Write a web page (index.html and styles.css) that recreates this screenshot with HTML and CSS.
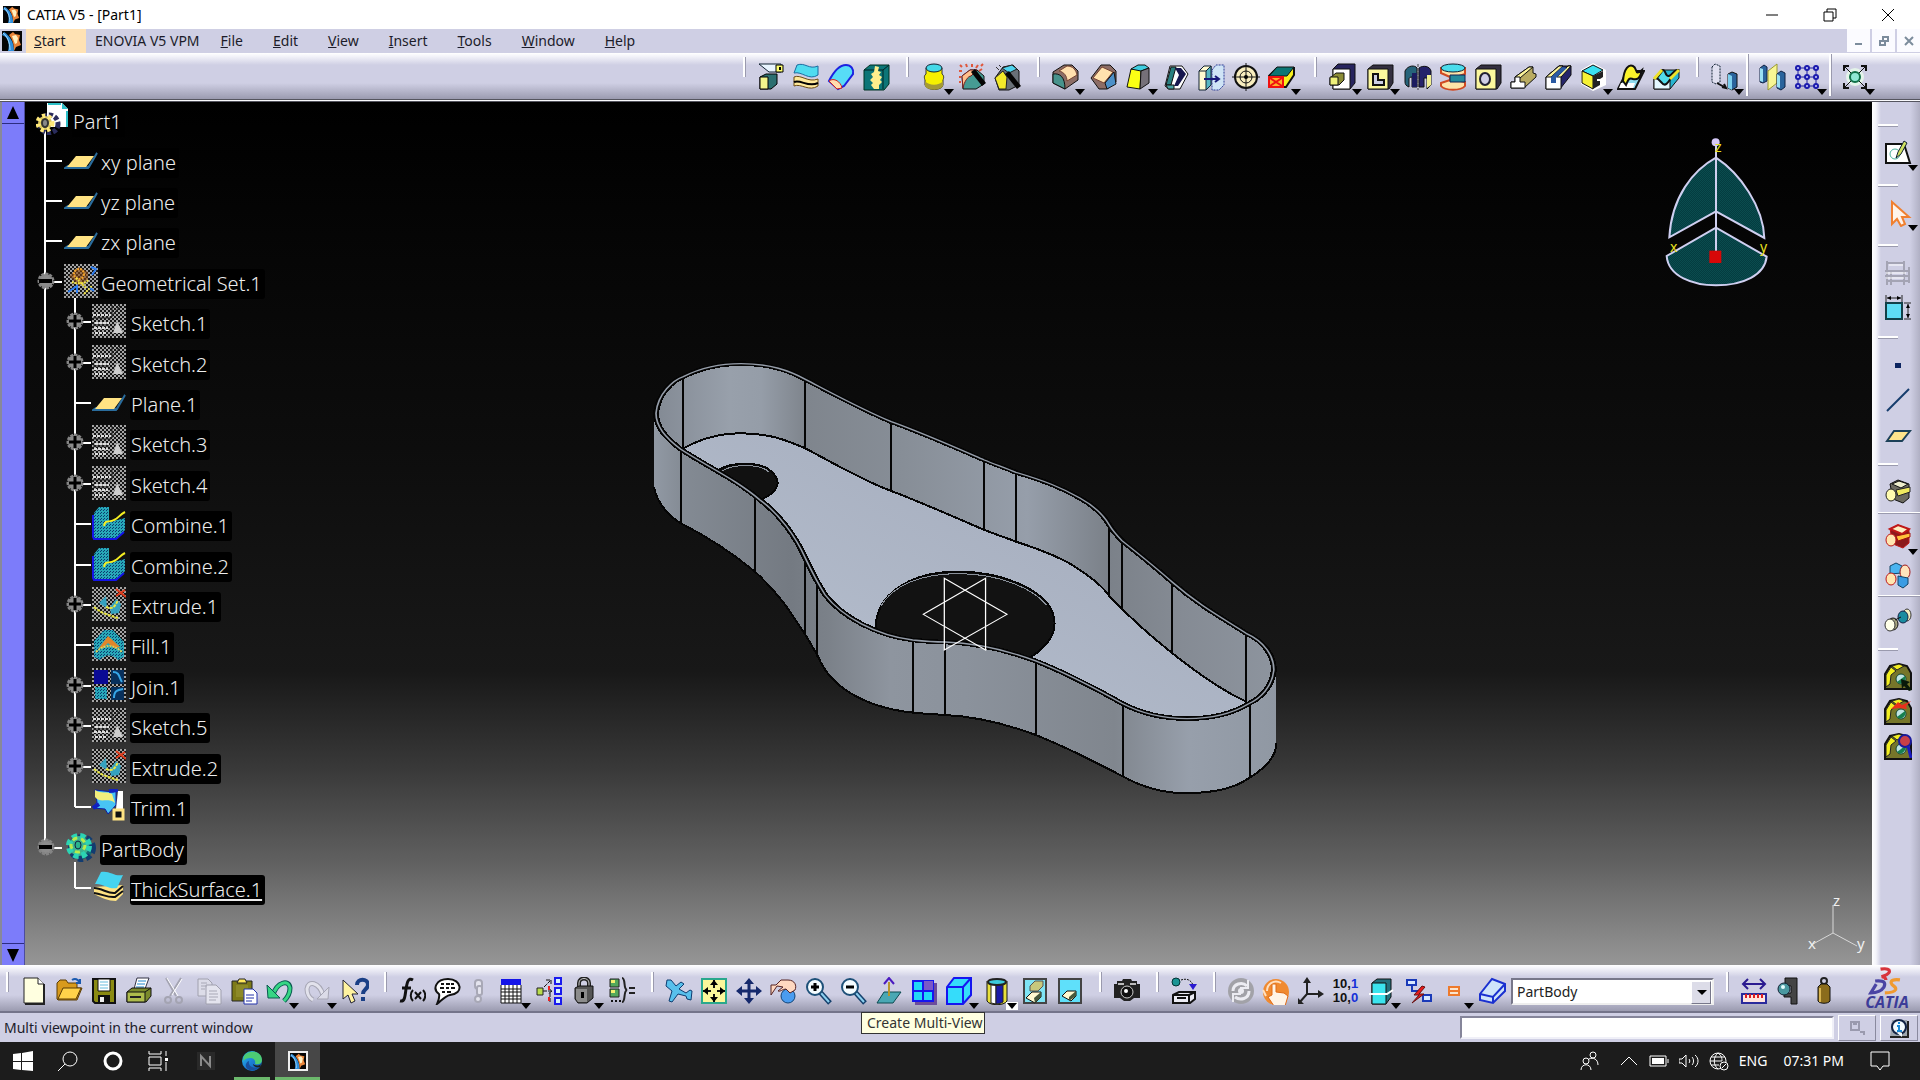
FILE: index.html
```html
<!DOCTYPE html>
<html lang="en">
<head>
<meta charset="utf-8">
<title>CATIA V5 - [Part1]</title>
<link rel="stylesheet" href="styles.css">
</head>
<body>
<svg class="defs" aria-hidden="true">
<defs>
<pattern id="grain" width="4" height="4" patternUnits="userSpaceOnUse"><rect width="4" height="4" fill="#151515"/><path d="M0 0h2v2H0zM2 2h2v2H2z" fill="#a4a4a4"/></pattern>
<pattern id="mesh" width="3" height="3" patternUnits="userSpaceOnUse"><rect width="3" height="3" fill="#28a8b8"/><path d="M0 0h1v1H0zM2 1h1v1H2z" fill="#0a3c70"/></pattern>
<linearGradient id="edge" x1="0" y1="0" x2="1" y2="1"><stop offset="0" stop-color="#2ac3e8"/><stop offset=".5" stop-color="#1b7fd6"/><stop offset="1" stop-color="#0d58b0"/></linearGradient>
</defs>
<symbol id="i-app" viewBox="0 0 20 20"><path fill="#050505" d="M0 0h20v20H0z"/><path d="M2 1c6 4 10 10 10 19H6C8 13 6 6 0 4z" fill="#2f8fdc"/><path d="M1 2c4 3 7 9 7 17" fill="none" stroke="#a8dcff"/><path d="M7 4l4-3 2 2 5 1-1 5 2 5-5 2-2 4c0-6-1-11-5-16z" fill="#e9853a"/><path d="M10 5l4-1 2 3-1 5-2 1z" fill="#fff0c0"/></symbol>

<symbol id="i-split" viewBox="0 0 28 28"><path d="M2 1h22v8H12z" fill="#e8f4ff" stroke="#123"/><path d="M19 2h7v7h-7z" fill="#ffff70" stroke="#000"/><path d="M22 4h2v3h-2z"/><path d="M3 14l6-3h11v10l-6 5H3z" fill="#2c6f70" stroke="#000"/><path d="M3 14h8v12H3z" fill="#f3f58c" stroke="#000"/></symbol>
<symbol id="i-thick" viewBox="0 0 28 28"><path d="M2 14c7-3 14 6 24 2v7c-9 6-17-3-24 0z" fill="#ffe99a" stroke="#6b4a10"/><path d="M2 19c7-3 14 6 24 1" fill="none" stroke="#000" stroke-width="2"/><path d="M2 10l3-8c8-3 12 5 21 1v9c-9 6-16-4-24-2z" fill="#4fdcf0" stroke="#1b6ca0"/></symbol>
<symbol id="i-close" viewBox="0 0 28 28"><path d="M2 18C8 6 14 2 19 2c5 0 8 4 7 9l-9 12-6 3z" fill="#57dcf7" stroke="#1c22e0" stroke-width="2"/><path d="M2 18c5-4 12 1 13 7l-5 1z" fill="#ffdcae" stroke="#c22"/></symbol>
<symbol id="i-sew" viewBox="0 0 28 28"><path d="M2 7l6-5h19v19l-5 6H2z" fill="#0c7577" stroke="#032"/><path d="M2 7h19l6-5M21 7v19" fill="none" stroke="#022"/><path d="M13 3l4 1-1 4 3 1-2 3 3 2-2 3 2 2-3 3v4h-5l-3-4 2-2-3-3 3-3-2-3 3-2z" fill="#ffee8c"/></symbol>
<symbol id="i-cyl" viewBox="0 0 28 28"><path d="M6 5v6c-3 2-1 6-1 6v5c2 6 17 6 18 0v-5s2-4-1-6V5z" fill="#f6f000" stroke="#333"/><path d="M5 18c4 5 14 5 18 0v5c-3 5-15 5-18 0z" fill="#a59a35"/><ellipse cx="14" cy="5" rx="8" ry="4" fill="#45d8e8" stroke="#123"/></symbol>
<symbol id="i-wand" viewBox="0 0 28 28"><path d="M4 13l8-6h7l7 6v8l-8 5H5z" fill="#469b93" stroke="#111"/><path d="M4 13l8-6h7l-6 6c-3 0-7 6-8 12z" fill="#ffc08c" stroke="#722"/><path d="M13 9l4-3 11 14-4 3z" fill="#050505"/><path d="M2 2l2 2M8 1l1 3M14 1v3M20 2l-2 3M1 8h3M1 14h2M24 6l-3 2M25 1l-2 2M1 19h2" stroke="#e0563a" stroke-width="2"/></symbol>
<symbol id="i-wand2" viewBox="0 0 28 28"><path d="M2 15l8-11 10-2 6 6v14l-10 5H6z" fill="#697078" stroke="#111"/><path d="M2 15l8-7 4 6-1 12H6z" fill="#f2e92a" stroke="#222"/><path d="M9 5l10-3 5 4-8 4z" fill="#4fd3ee" stroke="#222"/><path d="M12 11l4-3 12 15-4 3z" fill="#050505"/><path d="M3 4l3 3M6 2l2 2" stroke="#333"/></symbol>
<symbol id="i-fillet" viewBox="0 0 28 28"><path d="M2 9L13 2h8l6 6v9L14 26 2 20z" fill="#8c6d66" stroke="#111"/><path d="M8 8l8-5c6 0 9 4 10 9l-10 6c0-5-3-9-8-10z" fill="#ffdfae" stroke="#743"/><path d="M2 11c7-1 12 3 12 15L2 20z" fill="#48938c" stroke="#111"/></symbol>
<symbol id="i-chamf" viewBox="0 0 28 28"><path d="M2 15L12 2h9l6 6v11l-9 7H10z" fill="#8c6d66" stroke="#111"/><path d="M4 15l9-11 11 5-9 11z" fill="#ffe2ae" stroke="#743"/><path d="M16 20l9-11 2 12-9 5z" fill="#4c90c8" stroke="#111"/></symbol>
<symbol id="i-draft" viewBox="0 0 28 28"><path d="M3 24L7 6h10l-1 20z" fill="#fbff14" stroke="#111"/><path d="M7 6l7-4h7l4 3-8 3z" fill="#3fcde0" stroke="#111"/><path d="M17 8l8-3v15l-9 6z" fill="#757078" stroke="#111"/></symbol>
<symbol id="i-shell" viewBox="0 0 28 28"><path d="M3 23L8 3h12l6 8-8 15H7z" fill="#fff" stroke="#111"/><path d="M4 22L9 4h5l-5 18z" fill="#298080" stroke="#111"/><path d="M13 5h6l5 6-8 12h-4l5-11z" fill="#16164e"/><path d="M4 22h8v4H6z" fill="#4aa2a2" stroke="#111"/></symbol>
<symbol id="i-thk" viewBox="0 0 28 28"><path d="M2 8l5-5h7v19l-5 5H2z" fill="#fffbd0" stroke="#123"/><path d="M9 8l5-5v19l-5 5z" fill="#58b6c2" stroke="#123"/><path d="M2 8h7" stroke="#123"/><path d="M15 7l4-5h8v20l-5 5h-7z" fill="#cfe4f6" stroke="#2c3c96" stroke-dasharray="2 1"/><path d="M7 16h15m-4-3l4 3-4 3" fill="none" stroke="#181878" stroke-width="2"/></symbol>
<symbol id="i-thread" viewBox="0 0 28 28"><circle cx="14" cy="14" r="11" fill="#f8edbe" stroke="#111" stroke-width="2"/><circle cx="14" cy="14" r="6" fill="none" stroke="#111"/><path d="M14 0v28M0 14h28" stroke="#111"/><circle cx="14" cy="14" r="2"/></symbol>
<symbol id="i-rmface" viewBox="0 0 28 28"><path d="M2 13l8-8h17v7l-8 12H2z" fill="#f7f01e" stroke="#111" stroke-width="2"/><path d="M2 13l8-9h17l-7 9z" fill="#0c7674" stroke="#111"/><path d="M2 14h14v10H2z" fill="#ffb028" stroke="#f01010" stroke-width="2"/><path d="M3 15l12 8m0-8L3 23" stroke="#f01010" stroke-width="2"/></symbol>
<symbol id="i-pad" viewBox="0 0 28 28"><path d="M5 6l5-5h17v19l-5 6H5z" fill="#27245e" stroke="#111"/><path d="M5 6h17v20H5z" fill="#fff" stroke="#111"/><path d="M2 15l6-5h8v7l-5 5H2z" fill="#8b8c36" stroke="#111"/><path d="M2 14h8v8H2z" fill="#eef07a" stroke="#111"/></symbol>
<symbol id="i-pocket" viewBox="0 0 28 28"><path d="M2 6l5-4h20v18l-4 6H2z" fill="#332f40" stroke="#111"/><path d="M2 6h20v20H2z" fill="#fbf79d" stroke="#111"/><path d="M7 11h5v6h6v5H7z" fill="#cdcfe4" stroke="#111" stroke-width="2"/></symbol>
<symbol id="i-shaft" viewBox="0 0 28 28"><path d="M1 8c3-6 10-6 12-3v19H8V14c-2 0-3 1-3 2v8c-3-1-4-3-4-5z" fill="#26637a" stroke="#111"/><path d="M8 10h5v14H8z" fill="#1c1c60"/><path d="M15 5c4-3 11-2 12 3v14l-4 4v-11h-3v9h-5z" fill="#25226a" stroke="#111"/><path d="M23 12h4v10l-4 3z" fill="#f1ef92"/><path d="M14 1v26" stroke="#444" stroke-dasharray="3 1"/></symbol>
<symbol id="i-groove" viewBox="0 0 28 28"><path d="M2 5v5l9 4v3l-9 3v3c4 5 20 5 24 0v-4l-9-2v-3l9-3V5z" fill="#ffe3a8" stroke="#d04a22" stroke-width="2"/><path d="M11 12h15v7H11z" fill="#258a9c" stroke="#125"/><ellipse cx="14" cy="5" rx="12" ry="4" fill="#4adcec" stroke="#123"/></symbol>
<symbol id="i-hole" viewBox="0 0 28 28"><path d="M2 6l5-4h20v18l-4 6H2z" fill="#332f40" stroke="#111"/><path d="M2 6h20v20H2z" fill="#fbf79d" stroke="#111"/><ellipse cx="11" cy="16" rx="5" ry="6" fill="#cfcfe6" stroke="#223" stroke-width="2"/></symbol>
<symbol id="i-rib" viewBox="0 0 28 28"><path d="M2 25v-6h4v-5L20 4h4v6l3 1v3L15 25z" fill="#b9ab62" stroke="#111"/><path d="M6 14L20 4h4L11 15z" fill="#fbf39a" stroke="#111"/><path d="M2 19h4v-5h5v5h5v6H2z" fill="#fff" stroke="#111"/></symbol>
<symbol id="i-slot" viewBox="0 0 28 28"><path d="M2 14L15 3h12v9L16 26H2z" fill="#26256a" stroke="#111"/><path d="M2 14L15 3h4L8 14v5h3v-5L24 3h3L17 14v12H2z" fill="#fff" stroke="#111"/><path d="M2 14L15 3h4L7 14zM13 14L24 3h3L17 14z" fill="#fbf39a" stroke="#111"/><path d="M7 14L18 4l5 1-11 10v5H7z" fill="#2b5aa2"/></symbol>
<symbol id="i-solid" viewBox="0 0 28 28"><path d="M14 0l13 7v15l-13 6-12-7V7z" fill="#fff"/><path d="M3 8l11-6 10 5-10 6z" fill="#3be0f0" stroke="#111"/><path d="M3 8l11 5v13L3 20z" fill="#f6f234" stroke="#111"/><path d="M14 13l10-5v6l-3 2v6l-7 4z" fill="#222"/><path d="M18 17h5v5" stroke="#fff" stroke-width="2" fill="none"/></symbol>
<symbol id="i-loft" viewBox="0 0 28 28"><path d="M1 26L10 8h17l-9 18z" fill="#8fdcf0" stroke="#111" stroke-width="2"/><path d="M2 25l2-5h14l-2 5z" fill="#fff"/><path d="M6 18c1-13 6-17 10-15 5 2 1 11 9 4-2 9-5 10-9 9-4-2-5 1-7 6z" fill="#fbf32a" stroke="#111" stroke-width="2"/></symbol>
<symbol id="i-rloft" viewBox="0 0 28 28"><path d="M2 16L9 7h18v8l-9 11H2z" fill="#28b4d0" stroke="#111"/><path d="M2 16h16v10H2z" fill="#e4f8ff" stroke="#111"/><path d="M5 15l6-8c3 0 2 7 6 6s5-7 9-6l-7 8c-3 5-6 9-9 5z" fill="#52dbea" stroke="#111" stroke-width="2"/><path d="M2 16l8-9M18 16l9-9" stroke="#eee22a" stroke-width="3"/></symbol>
<symbol id="i-trans" viewBox="0 0 28 28"><path d="M2 4l3-3 5 2v16l-4 2-4-2z" fill="#e0e0f0" stroke="#123" stroke-dasharray="2 1"/><path d="M7 20l9 5m-4-1l4 1-2-4" fill="none" stroke="#111" stroke-width="2"/><path d="M18 11l4-2 5 2v13l-5 3-4-2z" fill="#2a639c" stroke="#111"/><path d="M18 11l4 2v14l-4-2z" fill="#7dd0ee"/></symbol>
<symbol id="i-mirror" viewBox="0 0 28 28"><path d="M2 5l4-3 3 2v14l-4 2-3-1z" fill="#2a639c" stroke="#124"/><path d="M2 5l3 1v13l-3-1z" fill="#9ae0f4"/><path d="M10 8l9-7v19l-9 7z" fill="#f8f694" stroke="#9a9a30"/><path d="M19 11l4-3 4 2v14l-4 3-4-2z" fill="#2a639c" stroke="#124"/><path d="M19 11l3 2v12l-3-1z" fill="#9ae0f4"/></symbol>
<symbol id="i-grid" viewBox="0 0 28 28"><path d="M5 2v24M14 2v24M23 2v24M2 5h24M2 14h24M2 23h24" stroke="#1c1c9c"/><g fill="#cfcfff" stroke="#1c1cae" stroke-width="2"><circle cx="5" cy="5" r="2"/><circle cx="14" cy="5" r="2"/><circle cx="23" cy="5" r="2"/><circle cx="5" cy="14" r="2"/><circle cx="14" cy="14" r="2"/><circle cx="23" cy="14" r="2"/><circle cx="5" cy="23" r="2"/><circle cx="14" cy="23" r="2"/><circle cx="23" cy="23" r="2"/></g></symbol>
<symbol id="i-scale" viewBox="0 0 28 28"><circle cx="14" cy="14" r="9" fill="#e4f4ea"/><path d="M4 4l20 20M24 4L4 24" stroke="#111"/><path d="M3 8V3h5M20 3h5v5M25 20v5h-5M8 25H3v-5" fill="none" stroke="#111" stroke-width="2"/><circle cx="14" cy="14" r="5" fill="#8fe8d4" stroke="#107048" stroke-width="2"/></symbol>

<symbol id="i-new" viewBox="0 0 28 28"><path d="M4 1h14l6 6v19H4z" fill="#ffffe0" stroke="#222"/><path d="M18 1v6h6" fill="#fff" stroke="#222"/><path d="M24 7v20H5" fill="none" stroke="#222" stroke-width="2"/></symbol>
<symbol id="i-open" viewBox="0 0 28 28"><path d="M2 22V6l3-3h6l2 3h9v5h5l-5 12H3z" fill="#d89a1c" stroke="#5a3c04"/><path d="M3 22l5-11h18l-5 11z" fill="#ffd24a" stroke="#5a3c04"/><path d="M17 3c3-2 6-1 8 3m0-4v4h-4" fill="none" stroke="#1a5ab0" stroke-width="2"/></symbol>
<symbol id="i-save" viewBox="0 0 28 28"><path d="M3 2h22v24H5l-2-2z" fill="#8b8b12" stroke="#111" stroke-width="2"/><path d="M8 2h12v12H8z" fill="#fff" stroke="#111"/><path d="M10 5h8M10 8h8M10 11h8" stroke="#6bd"/><path d="M8 18h12v8H8z" fill="#111"/><path d="M10 20h4v5h-4z" fill="#eee"/></symbol>
<symbol id="i-print" viewBox="0 0 28 28"><path d="M9 12l3-11h12l-4 11z" fill="#fff" stroke="#334"/><path d="M13 4h8M12 7h8M11 10h8" stroke="#28c" /><path d="M2 15l5-4h19v8l-5 6H2z" fill="#7b8a2c" stroke="#111"/><path d="M2 15h18v10H2zM20 15l6-4" fill="#aebc4c" stroke="#111"/><path d="M5 20h11" stroke="#222" stroke-width="2"/></symbol>
<symbol id="i-cut" viewBox="0 0 28 28"><g fill="none" stroke="#a4a4b2" stroke-width="2"><path d="M6 1l10 18M21 1L10 19"/><circle cx="8" cy="23" r="3"/><circle cx="19" cy="23" r="3"/></g><path d="M7 1l11 18M22 2L12 18" stroke="#fff"/></symbol>
<symbol id="i-copy" viewBox="0 0 28 28"><path d="M3 2h10l4 4v13H3z" fill="#dcdce8" stroke="#a0a0ae"/><path d="M11 8h10l5 5v14H11z" fill="#e4e4ee" stroke="#a0a0ae"/><path d="M6 6h6M6 9h6M6 12h4M14 14h8M14 17h9M14 20h9M14 23h7" stroke="#a8a8b6"/></symbol>
<symbol id="i-paste" viewBox="0 0 28 28"><path d="M2 4h20v20H2z" fill="#7d7a18" stroke="#222"/><path d="M6 8h12v12H6z" fill="#8d8a28"/><path d="M7 6l2-4h6l2 4z" fill="#ffe85a" stroke="#222"/><path d="M14 12h9l4 4v11H14z" fill="#fff" stroke="#23a"/><path d="M16 18h8M16 21h8M16 24h6" stroke="#23a"/></symbol>
<symbol id="i-undo" viewBox="0 0 28 28"><path d="M8 18C12 5 24 2 25 11c0 5-2 9-6 13" fill="none" stroke="#0a5a50" stroke-width="5"/><path d="M8 18C12 5 24 2 25 11c0 5-2 9-6 13" fill="none" stroke="#37d684" stroke-width="3"/><path d="M2 8l1 13h12z" fill="#37d684" stroke="#0a5a50"/></symbol>
<symbol id="i-redo" viewBox="0 0 28 28"><path d="M20 18C16 5 5 3 4 12c0 4 2 9 6 11" fill="none" stroke="#a6a6b4" stroke-width="5"/><path d="M20 18C16 5 5 3 4 12c0 4 2 9 6 11" fill="none" stroke="#e2e2ec" stroke-width="3"/><path d="M26 10l-1 12H14z" fill="#dcdce8" stroke="#a6a6b4"/></symbol>
<symbol id="i-help" viewBox="0 0 28 28"><path d="M2 3v19l5-4 3 8 4-2-3-7h6z" fill="#fff3a0" stroke="#223"/><path d="M16 8c0-7 11-7 11 0 0 4-5 4-5 9" fill="none" stroke="#1a3f86" stroke-width="4"/><path d="M20 20h4v4h-4z" fill="#1a3f86"/></symbol>
<symbol id="i-fx" viewBox="0 0 28 28"><path d="M15 3c-5-3-6 3-7 9-1 7-1 13-6 12M4 11h9" fill="none" stroke="#111" stroke-width="3"/><path d="M15 13c-3 3-3 8 0 11M25 13c3 3 3 8 0 11M17 15l6 7M23 15l-6 7" fill="none" stroke="#111" stroke-width="2"/></symbol>
<symbol id="i-talk" viewBox="0 0 28 28"><path d="M15 2c14 0 16 15 2 16-5 1-8 5-13 9 2-5 3-7 2-10C-1 12 3 2 15 2z" fill="#fff" stroke="#111" stroke-width="2"/><path d="M8 7h3m2 0h4m1 0h3M7 11h4m2 0h3m2 0h4M9 15h3m2 0h4" stroke="#111" stroke-width="2"/></symbol>
<symbol id="i-link" viewBox="0 0 28 28"><g fill="#e4e4ee" stroke="#a8a8b6" stroke-width="2"><rect x="10" y="3" width="7" height="9" rx="3"/><rect x="12" y="9" width="5" height="9" rx="2"/><circle cx="13" cy="22" r="3"/></g></symbol>
<symbol id="i-table" viewBox="0 0 28 28"><path d="M4 2h20v6H4z" fill="#1414e8"/><path d="M4 8h20v18H4z" fill="#fff"/><path d="M4 8v18h20V8M4 12h20M4 15h20M4 19h20M4 22h20M8 8v18M12 8v18M16 8v18M20 8v18" fill="none" stroke="#111"/></symbol>
<symbol id="i-tree" viewBox="0 0 28 28"><path d="M8 14h9m-4-3l4 3-4 3M9 10l7-7m-5 0h5v5M15 16v10" fill="none" stroke="#111" stroke-dasharray="4 1"/><path d="M2 11h6v7H2z" fill="#b8dc4c" stroke="#222"/><g fill="#d4f4ff" stroke="#1a1aee" stroke-width="2"><path d="M20 1h6v6h-6zM20 11h6v6h-6zM20 21h6v6h-6z"/></g><path d="M14 9v4M14 20v4" stroke="#e22" stroke-width="2"/></symbol>
<symbol id="i-lock" viewBox="0 0 28 28"><path d="M9 12V6c0-6 10-6 10 0v6" fill="none" stroke="#222" stroke-width="4"/><path d="M9 12V6c0-6 10-6 10 0v6" fill="none" stroke="#ccc"/><path d="M5 11l4-2h14v12l-6 5H8l-3-4z" fill="#555" stroke="#111"/><path d="M6 12h11v13H8l-2-3z" fill="#8c8c8c"/><path d="M11 15h3v6h-3z"/></symbol>
<symbol id="i-eq" viewBox="0 0 28 28"><path d="M2 2h9v8H2zM2 12h9v8H2z" fill="#52a85a" stroke="#222"/><path d="M3 3h4v3H3zM3 13h4v3H3z" fill="#f3ef70"/><path d="M3 24h2m2 0h2m2 0h2" stroke="#111" stroke-width="2"/><path d="M14 1c4 0 1 11 5 12-4 1-1 12-5 12" fill="none" stroke="#222" stroke-width="2"/><path d="M21 11h6M21 16h6" stroke="#222" stroke-width="2"/></symbol>

<symbol id="i-fly" viewBox="0 0 28 28"><path d="M2 3h4l5 6 5-4 3 2-5 5 7 4 4-3 2 1-1 9-4-1-1-3-8-2-6 8-3-1 3-10-6-5z" fill="#58c0ec" stroke="#0d3c70"/></symbol>
<symbol id="i-fit" viewBox="0 0 28 28"><path d="M2 2h24v24H2z" fill="#fbf79a" stroke="#2aa88c" stroke-width="2"/><path d="M14 3v8M14 17v8M3 14h8M17 14h8" stroke="#111" stroke-width="2"/><path d="M10 8l4-5 4 5zM10 20l4 5 4-5zM8 10l-5 4 5 4zM20 10l5 4-5 4z"/></symbol>
<symbol id="i-pan" viewBox="0 0 28 28"><path d="M14 4v20M4 14h20" stroke="#15296c" stroke-width="3"/><path d="M9 7l5-6 5 6zM9 21l5 6 5-6zM7 9l-6 5 6 5zM21 9l6 5-6 5z" fill="#15296c"/></symbol>
<symbol id="i-rot" viewBox="0 0 28 28"><circle cx="18" cy="19" r="7" fill="#4a9cf0" stroke="#147"/><path d="M1 8h5l5-5h7c7 0 9 6 7 10l-5 3-4-4c-4 0-5 3-8 2l5-4-6-1-6 9z" fill="#ffd8c0" stroke="#522"/></symbol>
<symbol id="i-zin" viewBox="0 0 28 28"><path d="M15 15l10 11" stroke="#14406c" stroke-width="5"/><path d="M16 16l8 9" stroke="#8cd0f0" stroke-width="2"/><circle cx="10" cy="10" r="8" fill="#f4fcff" stroke="#1d5078" stroke-width="2"/><path d="M10 6v8M6 10h8" stroke="#000" stroke-width="3"/></symbol>
<symbol id="i-zout" viewBox="0 0 28 28"><path d="M15 15l10 11" stroke="#14406c" stroke-width="5"/><path d="M16 16l8 9" stroke="#8cd0f0" stroke-width="2"/><circle cx="10" cy="10" r="8" fill="#f4fcff" stroke="#1d5078" stroke-width="2"/><path d="M6 10h8" stroke="#000" stroke-width="3"/></symbol>
<symbol id="i-norm" viewBox="0 0 28 28"><path d="M2 26l7-11h17l-8 11z" fill="#4aa8b4" stroke="#0c4a50"/><path d="M14 5v14" stroke="#b8962c" stroke-width="2"/><path d="M9 7l5-6 5 6" fill="none" stroke="#4a1ac0" stroke-width="2"/></symbol>
<symbol id="i-multi" viewBox="0 0 28 28"><path d="M5 6h22v22H5z" fill="#6c4c9c"/><path d="M3 4h20v20H3z" fill="#22d8f6" stroke="#1616f0" stroke-width="2"/><path d="M13 4h10v10H13z" fill="#7a58c8"/><path d="M13 4v20M3 14h20" stroke="#1616f0" stroke-width="2"/></symbol>
<symbol id="i-cube" viewBox="0 0 28 28"><path d="M2 10L9 1h17v17l-8 9H2z" fill="#35dcfa" stroke="#1616f0" stroke-width="2"/><path d="M2 10h16v17M18 10l8-9" fill="none" stroke="#1616f0" stroke-width="2"/></symbol>
<symbol id="i-shade" viewBox="0 0 28 28"><path d="M4 4v20c3 5 17 5 20 0V4" fill="#e8e03c" stroke="#111"/><path d="M8 7v19l5 1V8z" fill="#fff" stroke="#222"/><path d="M13 8v19c3 0 5-1 7-2V7z" fill="#1a1aa8" stroke="#222"/><ellipse cx="14" cy="5" rx="9" ry="3" fill="#3ccbdc" stroke="#222" stroke-width="2"/></symbol>
<symbol id="i-hide" viewBox="0 0 28 28"><path d="M3 2h22v24H3z" fill="#7fe4f4" stroke="#444" stroke-width="2"/><path d="M9 9l5-5h8v5l-5 5H9z" fill="#c8c87c" stroke="#555"/><path d="M5 21l6-6h9v5l-6 6z" fill="#fff9d0" stroke="#111"/><path d="M14 26l6-6v-5l-7 6z" fill="#47583c"/></symbol>
<symbol id="i-swap" viewBox="0 0 28 28"><path d="M3 2h22v24H3z" fill="#5fe0fa" stroke="#444" stroke-width="2"/><path d="M6 19l5-5h9v5l-5 5z" fill="#fff9d0" stroke="#111"/><path d="M13 24l7-5v-5l-7 6z" fill="#47583c"/></symbol>
<symbol id="i-cam" viewBox="0 0 28 28"><path d="M1 7h3V4h5l1-2h8l1 2h5v3h3v14h-6l-4 3h-6l-4-3H1z" fill="#222"/><path d="M5 7h6M17 7h6" stroke="#bbb" stroke-width="2"/><circle cx="14" cy="15" r="6" fill="#111" stroke="#ccc"/><circle cx="13" cy="14" r="2" fill="#fff"/></symbol>
<symbol id="i-upd" viewBox="0 0 28 28"><circle cx="6" cy="5" r="4" fill="#1a9494" stroke="#033"/><path d="M11 3c6-2 10 0 12 5" fill="none" stroke="#111" stroke-dasharray="2 1"/><path d="M19 7h8l-4 6z" fill="#2a1ad0"/><path d="M3 18l6-3h16v7l-5 4H3z" fill="#ececf4" stroke="#111" stroke-width="2"/><path d="M3 18h16v8M19 18l6-3M7 21h9" fill="none" stroke="#111" stroke-width="2"/></symbol>
<symbol id="i-all" viewBox="0 0 28 28"><circle cx="14" cy="14" r="13" fill="#a2a2a8"/><path d="M20 9c-5-5-14-2-14 5M8 20c5 4 14 2 14-6" fill="none" stroke="#ececf2" stroke-width="3"/><path d="M21 3v8h-8M6 25v-8h8" fill="none" stroke="#ececf2" stroke-width="2"/><circle cx="14" cy="14" r="3" fill="#ececf2"/></symbol>
<symbol id="i-manu" viewBox="0 0 28 28"><circle cx="14" cy="15" r="13" fill="#f08a30"/><path d="M10 18V7h4v8l8 1 4 3-3 10H12l-6-9z" fill="#fff4e6" stroke="#e06a14"/><path d="M5 14c0-7 7-12 14-8M4 19L1 13" fill="none" stroke="#ffe0c0" stroke-width="2"/></symbol>
<symbol id="i-axis" viewBox="0 0 28 28"><path d="M10 2v15h15M10 17l-8 9" fill="none" stroke="#222" stroke-width="2"/><path d="M6 6l4-6 4 6zM21 13l6 4-6 4zM1 21v6h6z" fill="#222"/></symbol>
<symbol id="i-body" viewBox="0 0 28 28"><path d="M5 6l5-4h14v18l-5 7H5z" fill="#24707c" stroke="#111"/><path d="M5 6h14v21H5z" fill="#3ce4ee" stroke="#111"/><path d="M2 17h18l6-4" fill="none" stroke="#fff" stroke-width="2"/></symbol>
<symbol id="i-cat" viewBox="0 0 28 28"><path d="M2 3h9v5H2zM18 18h8v6h-8z" fill="#d8e8ff" stroke="#1a3ab8" stroke-width="2"/><path d="M7 8v6h8" fill="none" stroke="#1a3ab8" stroke-width="2"/><path d="M17 9l-8 9h5l-7 8 12-9h-5l6-7z" fill="#e81c1c" stroke="#611"/></symbol>
<symbol id="i-lines" viewBox="0 0 28 28"><path d="M9 10h10v8H9zM9 14h10" fill="#fbe4cc" stroke="#ee7a2c" stroke-width="2"/></symbol>
<symbol id="i-face" viewBox="0 0 28 28"><path d="M2 17L14 2l13 5v7L15 26 2 23z" fill="#cfe4fa" stroke="#1a30d0" stroke-width="2"/><path d="M2 17l13 3L27 7M15 20v6" fill="none" stroke="#1a30d0" stroke-width="2"/></symbol>
<symbol id="i-meas" viewBox="0 0 28 28"><path d="M3 7h22M8 2L3 7l5 5M20 2l5 5-5 5" fill="none" stroke="#2a1a90" stroke-width="2"/><path d="M2 17h24v9H2z" fill="#ffe6e0" stroke="#2a2a9c" stroke-width="2"/><path d="M6 17v4M10 17v4M14 17v4M18 17v4M22 17v4" stroke="#e02020" stroke-width="2"/></symbol>
<symbol id="i-cal" viewBox="0 0 28 28"><path d="M10 1h12v26h-6v-7H9v-4h7V9h-6z" fill="#444" stroke="#111"/><circle cx="9" cy="12" r="6" fill="#4a98a0" stroke="#123"/><circle cx="8" cy="10" r="2" fill="#e4ffff"/></symbol>
<symbol id="i-wt" viewBox="0 0 28 28"><circle cx="14" cy="4" r="3" fill="none" stroke="#222" stroke-width="2"/><path d="M8 10l3-3h6l3 3v14c-2 3-10 3-12 0z" fill="#8b6c1c" stroke="#111"/><path d="M10 11v14" stroke="#d8b450" stroke-width="2"/></symbol>

<symbol id="i-sketch" viewBox="0 0 28 28"><path d="M2 5h18l6 19H2z" fill="#fff" stroke="#111" stroke-width="2"/><circle cx="11" cy="15" r="5" fill="none" stroke="#4ab09c"/><path d="M12 19l2-6 6-11 3 2-6 11z" fill="#cfe060" stroke="#123"/></symbol>
<symbol id="i-arrow" viewBox="0 0 28 28"><path d="M8 3v22l5-5 4 7 4-2-3-7h7z" fill="#fff4ea" stroke="#f08030" stroke-width="2"/></symbol>
<symbol id="i-dimx" viewBox="0 0 28 28"><path d="M3 2v24M20 2v24M3 4h17M1 12h24M1 17h24M3 22h22M7 12v14M25 8v16" fill="none" stroke="#a4a4b4" stroke-width="2"/><path d="M5 6h14M2 14h20M2 19h18" stroke="#fff"/></symbol>
<symbol id="i-dim" viewBox="0 0 28 28"><path d="M2 9h16v16H2z" fill="#5fdcf4" stroke="#124048" stroke-width="2"/><path d="M2 1v7M18 1v7M3 4h14M20 9h7M20 25h7M24 10v14" stroke="#222"/><path d="M3 4l4-2v4zM17 4l-4-2v4zM24 10l-2 4h4zM24 24l-2-4h4z"/></symbol>
<symbol id="i-pt" viewBox="0 0 28 28"><path d="M11 12h6v5h-6z" fill="#0c2460"/></symbol>
<symbol id="i-ln" viewBox="0 0 28 28"><path d="M3 25L25 3" stroke="#153c6c" stroke-width="2"/></symbol>
<symbol id="i-pl" viewBox="0 0 28 28"><path d="M3 20l7-10h16l-8 10z" fill="#ffe48c" stroke="#1c4058" stroke-width="2"/></symbol>
<symbol id="i-b1" viewBox="0 0 28 28"><path d="M6 6l8-4 11 4v14l-6 5-10-4z" fill="#6c6a60" stroke="#111"/><path d="M8 6l7-3 9 3-7 4z" fill="#eeeecc" stroke="#111"/><path d="M12 12l14-3v5l-12 4z" fill="#f0ea60" stroke="#222"/><ellipse cx="7" cy="17" rx="5" ry="6" fill="#fffbb0" stroke="#222"/></symbol>
<symbol id="i-b2" viewBox="0 0 28 28"><path d="M6 6l8-4 11 4v14l-6 5-10-4z" fill="#8c1a1c" stroke="#c01818"/><path d="M6 6l8-4 11 4-7 5z" fill="#fff0c0" stroke="#c01818" stroke-width="2"/><path d="M12 13l14-3v4l-12 4z" fill="#ffc23a" stroke="#a01010"/><ellipse cx="7" cy="17" rx="5" ry="6" fill="#ffe6b0" stroke="#c01818"/></symbol>
<symbol id="i-b3" viewBox="0 0 28 28"><path d="M6 5l6-3 6 3v7l-12 1z" fill="#4ab4f0" stroke="#146"/><ellipse cx="21" cy="11" rx="5" ry="7" fill="#ffe4bc" stroke="#a01818"/><path d="M14 15l10 2v6l-5 4-5-3z" fill="#3a9ce4" stroke="#146"/><ellipse cx="7" cy="18" rx="5" ry="6" fill="#ffe6b0" stroke="#c01818"/></symbol>
<symbol id="i-b4" viewBox="0 0 28 28"><ellipse cx="9" cy="18" rx="5" ry="6" fill="#a8a480" stroke="#111"/><ellipse cx="6" cy="19" rx="5" ry="6" fill="#ffffe8" stroke="#333"/><ellipse cx="23" cy="9" rx="4" ry="6" fill="#f4f0c0" stroke="#333"/><ellipse cx="19" cy="11" rx="5" ry="6" fill="#1a8ca0" stroke="#124"/><path d="M11 14l6-3" stroke="#111"/></symbol>
<symbol id="i-m" viewBox="0 0 28 28"><path d="M1 11L6 3l9-2 8 2 4 7v16H1z" fill="#76762a" stroke="#111" stroke-width="2"/><path d="M2 12l5-8 5 4-5 4-1 9-4 3zM8 3l7-2 5 2-7 4z" fill="#f2ee20" stroke="#222"/><circle cx="17" cy="16" r="5" fill="#bfe4e4" stroke="#143"/><path d="M13 19l8-6c2 5-4 10-8 6z" fill="#168050"/></symbol>
<symbol id="i-m1" viewBox="0 0 28 28"><use href="#i-m"/><path d="M17 16l9 3-3 2 5 6-3 1-5-5-2 3z" fill="#091909"/></symbol>
<symbol id="i-m2" viewBox="0 0 28 28"><use href="#i-m"/><path d="M7 11l7-7 4 3 9-4-5 5 1 3-8-1z" fill="#e8301c"/></symbol>
<symbol id="i-m3" viewBox="0 0 28 28"><use href="#i-m"/><ellipse cx="21" cy="8" rx="6" ry="6" fill="#c84048" stroke="#1a1a9c" stroke-width="2"/><path d="M24 13l3 12" stroke="#1a1ac0" stroke-width="3"/></symbol>

<symbol id="t-part" viewBox="0 0 32 32"><path d="M11 0h15l6 6v18H11z" fill="#fff"/><path d="M26 0v6h6" fill="#2cc0c8"/><path d="M12 1h13M31 8v16" stroke="#2cc0c8" stroke-width="2"/><circle cx="13" cy="21" r="9" fill="none" stroke="#2a2c5c" stroke-width="5" stroke-dasharray="4 2"/><circle cx="9" cy="20" r="7" fill="#d8c460" stroke="#ffe97a" stroke-width="5" stroke-dasharray="3 3"/><ellipse cx="9" cy="20" rx="3" ry="4" fill="#888" stroke="#333" stroke-width="2"/></symbol>
<symbol id="t-plane" viewBox="0 0 34 34"><path d="M1 25l3-2 21 1 8-14-9 15z" fill="#2a6c9c" stroke="#2a6c9c" stroke-width="2"/><path d="M3 24l9-11h18l-8 11z" fill="#ffe383"/></symbol>
<symbol id="t-geo" viewBox="0 0 34 34"><path d="M0 0h34v34H0z" fill="url(#grain)"/><path d="M5 12L15 3l9 5v8l-9 6z" fill="#8a4a12" opacity=".6"/><circle cx="15" cy="10" r="5" fill="none" stroke="#f4a428" stroke-width="2" stroke-dasharray="2 1"/><path d="M8 18c4 2 14 2 16-2M20 30l8-8M12 14l10 10" stroke="#f4e440" stroke-width="2" fill="none" stroke-dasharray="2 1"/><path d="M27 3l5 2-4 6M4 28l9-6v7M26 24l4 3" stroke="#2c7cf0" stroke-width="2" fill="none"/></symbol>
<symbol id="t-sk" viewBox="0 0 34 34"><path d="M0 0h34v34H0z" fill="url(#grain)"/><path d="M1 11h18M3 19h14M2 24h14M3 29h12" stroke="#ddd" stroke-width="2" stroke-dasharray="3 1"/><path d="M21 29l4-12 6 12z" fill="#ccc"/><path d="M20 12L28 2M1 14h18M1 21h16M20 1v12" stroke="#222" stroke-width="1"/></symbol>
<symbol id="t-comb" viewBox="0 0 34 34"><path d="M2 7l5-6h10v15l8-2 8-2v12l-8 9H1z" fill="url(#mesh)"/><path d="M1 9v22l1 2h22l8-7" fill="none" stroke="#1414e8" stroke-width="2"/><path d="M12 20c1-7 5-3 10-6 5-2 5-5 11-8" fill="none" stroke="#f7f022" stroke-width="2"/></symbol>
<symbol id="t-ext" viewBox="0 0 34 34"><path d="M0 0h34v34H0z" fill="url(#grain)"/><path d="M7 16l7-7 1 12zM18 20l6-8 5 5-2 9-8 1z" fill="#35a2c0"/><path d="M2 20c7 6 14 8 24 11M14 20c5 2 8 2 12-7" stroke="#e9e640" stroke-width="2" fill="none" stroke-dasharray="3 1"/><path d="M24 2l10 8M33 3l-9 6" stroke="#e03c1c" stroke-width="2"/></symbol>
<symbol id="t-fill" viewBox="0 0 34 34"><path d="M0 0h34v34H0z" fill="url(#grain)"/><path d="M2 30V14L12 3h9l11 12v15l-6 3c-5-6-13-6-18 0z" fill="url(#mesh)"/><path d="M7 21l9-12 12 11-6 1-6-5-5 5z" fill="#e0862c"/><path d="M4 25c8-8 18-8 26 0" stroke="#ddd25c" stroke-width="2" fill="none" stroke-dasharray="2 1"/></symbol>
<symbol id="t-join" viewBox="0 0 34 34"><path d="M0 0h34v34H0z" fill="url(#grain)"/><path d="M2 2h14v14H2z" fill="#0a0a94"/><path d="M19 2h13v14H19zM19 19h13v13H19z" fill="#08305c"/><path d="M3 19h12v12H3z" fill="url(#mesh)"/><path d="M21 4c7 0 6 6 9 10M22 30c0-7 3-8 9-9" stroke="#36a6e8" stroke-width="2" fill="none"/></symbol>
<symbol id="t-trim" viewBox="0 0 34 34"><path d="M3 1l18 2 3-1v14l-8 9-3-5-12-1 4-6z" fill="#48c4f4" stroke="#0c1ca8"/><path d="M3 1c6 4 12 1 17 4l3 9C16 8 8 15 3 8z" fill="#f2ee7c"/><path d="M17 2l9-1M1 19l6-4" stroke="#1020c0" stroke-width="4"/><path d="M26 2h5v18h-7z" fill="#fff"/><path d="M22 21h9v9h-9z" fill="#111" stroke="#ffe383" stroke-width="3"/></symbol>
<symbol id="t-body" viewBox="0 0 34 34"><circle cx="18" cy="18" r="11" fill="#136a74" stroke="#123c70" stroke-width="6" stroke-dasharray="5 3"/><circle cx="15" cy="16" r="10" fill="#3cb490" stroke="#2cd4b4" stroke-width="6" stroke-dasharray="5 3"/><circle cx="14" cy="15" r="7" fill="none" stroke="#b8ec4c" stroke-width="3" stroke-dasharray="5 4"/><ellipse cx="14" cy="15" rx="3" ry="4" fill="#2bb48c" stroke="#124"/></symbol>
<symbol id="t-thick" viewBox="0 0 34 34"><path d="M2 17l29-2v9l-7 7c-8 0-14-3-22-7z" fill="#ffe383"/><path d="M2 18c8 0 14 6 21 5l8-7M2 23c8 1 14 5 21 4l8-6" fill="none" stroke="#111" stroke-width="2"/><path d="M3 14l6-12c8-2 14 5 22 3l-6 13c-8 2-14-5-22-4z" fill="#45d4f0"/></symbol>
<symbol id="t-plus" viewBox="0 0 18 18"><circle cx="9" cy="9" r="7" fill="#8c8c8c" stroke="#848484" stroke-width="3" stroke-dasharray="3 1"/><path d="M9 3v12M3 9h12" stroke="#000" stroke-width="3"/></symbol>
<symbol id="t-minus" viewBox="0 0 18 18"><circle cx="9" cy="9" r="7" fill="#8c8c8c" stroke="#848484" stroke-width="3" stroke-dasharray="3 1"/><path d="M2 9h13" stroke="#000" stroke-width="4"/></symbol>
</svg>

<header class="titlebar">
  <svg class="appicon"><use href="#i-app"/></svg>
  <h1>CATIA V5 - [Part1]</h1>
  <button class="win" aria-label="Minimize"><svg viewBox="0 0 14 14"><path d="M1 7h12"/></svg></button>
  <button class="win" aria-label="Restore"><svg viewBox="0 0 14 14"><path d="M1 4h9v9H1zM4 4V1h9v9h-3"/></svg></button>
  <button class="win" aria-label="Close"><svg viewBox="0 0 14 14"><path d="M1 1l12 12M13 1L1 13"/></svg></button>
</header>
<nav class="menubar">
  <svg class="menuicon"><use href="#i-app"/></svg>
  <button class="active"><u>S</u>tart</button>
  <button class="vpm">ENOVIA V5 VPM</button>
  <button><u>F</u>ile</button>
  <button><u>E</u>dit</button>
  <button><u>V</u>iew</button>
  <button><u>I</u>nsert</button>
  <button><u>T</u>ools</button>
  <button><u>W</u>indow</button>
  <button><u>H</u>elp</button>
  <div class="mdi">
    <button aria-label="Minimize document"><svg viewBox="0 0 10 10"><path d="M1 8h7"/></svg></button>
    <button aria-label="Restore document"><svg viewBox="0 0 10 10"><path d="M1 5h5v4H1zM4 4V1h5v4H7" /></svg></button>
    <button aria-label="Close document"><svg viewBox="0 0 10 10"><path d="M1 1l8 8M9 1L1 9"/></svg></button>
  </div>
</nav>

<div class="bar top">
  <i class="sep"></i>
  <button class="b" aria-label="Split"><svg><use href="#i-split"/></svg></button>
  <button class="b" aria-label="Thick Surface"><svg><use href="#i-thick"/></svg></button>
  <button class="b" aria-label="Close Surface"><svg><use href="#i-close"/></svg></button>
  <button class="b" aria-label="Sew Surface"><svg><use href="#i-sew"/></svg></button>
  <i class="sep"></i>
  <button class="b dd" aria-label="Analysis"><svg><use href="#i-cyl"/></svg></button>
  <button class="b" aria-label="Apply Material"><svg><use href="#i-wand"/></svg></button>
  <button class="b" aria-label="Draft Analysis"><svg><use href="#i-wand2"/></svg></button>
  <i class="sep"></i>
  <button class="b dd" aria-label="Edge Fillet"><svg><use href="#i-fillet"/></svg></button>
  <button class="b" aria-label="Chamfer"><svg><use href="#i-chamf"/></svg></button>
  <button class="b dd" aria-label="Draft Angle"><svg><use href="#i-draft"/></svg></button>
  <button class="b" aria-label="Shell"><svg><use href="#i-shell"/></svg></button>
  <button class="b" aria-label="Thickness"><svg><use href="#i-thk"/></svg></button>
  <button class="b" aria-label="Thread"><svg><use href="#i-thread"/></svg></button>
  <button class="b dd" aria-label="Remove Face"><svg><use href="#i-rmface"/></svg></button>
  <i class="sep"></i>
  <button class="b dd" aria-label="Pad"><svg><use href="#i-pad"/></svg></button>
  <button class="b dd" aria-label="Pocket"><svg><use href="#i-pocket"/></svg></button>
  <button class="b" aria-label="Shaft"><svg><use href="#i-shaft"/></svg></button>
  <button class="b" aria-label="Groove"><svg><use href="#i-groove"/></svg></button>
  <button class="b" aria-label="Hole"><svg><use href="#i-hole"/></svg></button>
  <button class="b" aria-label="Rib"><svg><use href="#i-rib"/></svg></button>
  <button class="b" aria-label="Slot"><svg><use href="#i-slot"/></svg></button>
  <button class="b dd" aria-label="Solid Combine"><svg><use href="#i-solid"/></svg></button>
  <button class="b" aria-label="Multi-sections Solid"><svg><use href="#i-loft"/></svg></button>
  <button class="b" aria-label="Removed Multi-sections Solid"><svg><use href="#i-rloft"/></svg></button>
  <i class="sep"></i>
  <button class="b dd" aria-label="Translation"><svg><use href="#i-trans"/></svg></button>
  <i class="sep tall"></i>
  <button class="b" aria-label="Mirror"><svg><use href="#i-mirror"/></svg></button>
  <button class="b dd" aria-label="Rectangular Pattern"><svg><use href="#i-grid"/></svg></button>
  <i class="sep tall"></i>
  <button class="b dd" aria-label="Scaling"><svg><use href="#i-scale"/></svg></button>
</div>

<main class="work">
  <div class="strip">
    <button aria-label="Scroll up"><svg viewBox="0 0 14 14"><path d="M7 0l6 13H1z"/></svg></button>
    <button aria-label="Scroll down"><svg viewBox="0 0 14 14"><path d="M7 14L1 1h12z"/></svg></button>
  </div>
  <section class="view">
    <svg class="scene" viewBox="25 102 1847 863" preserveAspectRatio="xMidYMid meet">
      <defs>
        <linearGradient id="outer" gradientUnits="userSpaceOnUse" x1="33" y1="0" x2="1512" y2="0"><stop offset="0" stop-color="#9199a4"/><stop offset=".05" stop-color="#838a93"/><stop offset=".22" stop-color="#747a82"/><stop offset=".28" stop-color="#7b8189"/><stop offset=".38" stop-color="#8e959f"/><stop offset=".5" stop-color="#8b929c"/><stop offset=".74" stop-color="#80868e"/><stop offset=".86" stop-color="#979fab"/><stop offset="1" stop-color="#9098a3"/></linearGradient>
        <linearGradient id="inner" gradientUnits="userSpaceOnUse" x1="38" y1="0" x2="1508" y2="0"><stop offset="0" stop-color="#838a94"/><stop offset=".12" stop-color="#98a0ab"/><stop offset=".17" stop-color="#959da8"/><stop offset=".24" stop-color="#7f858d"/><stop offset=".4" stop-color="#878e97"/><stop offset=".6" stop-color="#969eaa"/><stop offset=".73" stop-color="#7b8189"/><stop offset=".85" stop-color="#858b94"/><stop offset="1" stop-color="#8d949e"/></linearGradient>
        <linearGradient id="floor" gradientUnits="userSpaceOnUse" x1="300" y1="900" x2="700" y2="300"><stop offset="0" stop-color="#b3bccc"/><stop offset="1" stop-color="#a8b0c0"/></linearGradient>
        <path id="rim" d="M38 190C42 130 80 90 103 80C150 50 200 41 240 41C310 41 355 62 393 88C460 132 530 180 597 215C670 248 745 290 818 330C845 344 870 354 893 367C960 392 1000 412 1045 444C1075 465 1100 492 1115 525C1122 540 1133 556 1145 572C1185 612 1225 652 1265 697C1330 768 1385 805 1440 850C1485 875 1506 920 1506 960C1502 1010 1475 1045 1445 1062C1400 1096 1350 1106 1300 1106C1240 1106 1190 1090 1145 1060C1080 1014 1010 968 940 933C870 900 800 879 725 876C700 876 670 873 648 870C560 856 480 800 440 735C425 705 408 665 393 625C370 560 330 490 285 450C230 390 160 350 97 298C60 262 38 230 38 190Z"/>
        <clipPath id="inside"><use href="#rim"/></clipPath>
        <pattern id="dots" width="6" height="6" patternUnits="userSpaceOnUse"><path d="M0 0h6v6H0z" fill="#043c40"/><path d="M0 0h3v3H0zM3 3h3v3H3z" fill="#0a4c4e"/></pattern>
      </defs>
      <g class="part" transform="translate(640 350) scale(.4209 .3333)">
        <path fill="url(#outer)" d="M33 190V410C40 460 70 500 97 520C160 560 220 610 273 665C330 730 360 790 393 855C405 880 415 900 425 925C450 1000 520 1070 648 1088C680 1092 700 1093 725 1095C800 1100 870 1122 940 1155C1010 1190 1080 1235 1145 1278C1190 1310 1240 1330 1300 1330C1360 1328 1410 1318 1450 1282C1490 1250 1512 1215 1512 1180V950Z"/>
        <use href="#rim" fill="url(#inner)"/>
        <g clip-path="url(#inside)">
          <path fill="url(#floor)" class="ink" d="M103 295C150 262 200 250 240 250C310 250 350 272 393 295C460 340 530 392 597 423C670 458 745 500 818 540C860 560 880 568 893 575C960 602 1010 628 1045 660C1075 685 1100 710 1115 738C1165 805 1215 860 1265 910C1320 965 1380 1020 1440 1055V1250H1000L200 900L97 298Z"/>
          <path fill="#111" class="ink" d="M190 358C220 335 290 335 312 365C335 390 335 425 285 450L200 500Z"/>
          <path fill="none" stroke="#8a919b" class="thin" d="M196 362C224 341 288 341 307 367"/>
          <path fill="#121212" class="ink" d="M560 845C555 735 640 665 755 665C870 665 985 730 985 820C985 865 960 895 930 920L800 1000Z"/>
          <path fill="none" stroke="#8a919b" class="thin" d="M572 770C600 705 670 671 755 671C850 671 930 712 966 765"/>
        </g>
        <path fill="none" class="ink" d="M103 85V295M393 88V295M597 215V423M818 330V540M893 367V575M1115 525V738M1145 572V778M1265 697V910M1440 850V1055M97 298V520M273 445V665M393 632V855M421 700V920M648 872V1088M725 880V1095M940 933V1155M1147 1060V1278M1450 1062V1282"/>
        <path fill="none" class="ink" d="M33 410C40 460 70 500 97 520C160 560 220 610 273 665C330 730 360 790 393 855C405 880 415 900 425 925C450 1000 520 1070 648 1088C680 1092 700 1093 725 1095C800 1100 870 1122 940 1155C1010 1190 1080 1235 1145 1278C1190 1310 1240 1330 1300 1330C1360 1328 1410 1318 1450 1282C1490 1250 1512 1215 1512 1180"/>
        <use href="#rim" class="rimdark"/>
        <use href="#rim" class="rimlight"/>
        <path class="axes" d="M723 685V900L872 793ZM821 685V900L673 793Z"/>
      </g>
      <g class="compass" transform="translate(1640 110) scale(.3333)">
        <path d="M228 143C160 180 95 260 88 382L228 304ZM228 143C300 190 370 290 373 384L228 304ZM228 353L80 438C85 500 160 526 228 526C310 526 375 495 380 440Z"/>
        <path d="M228 100V425"/>
        <circle cx="227" cy="97" r="12"/>
        <rect x="208" y="422" width="36" height="37"/>
      </g>
      <g class="clabel"><text x="1715" y="152">z</text><text x="1670" y="252">x</text><text x="1760" y="252">y</text></g>
      <path class="triad" d="M1833 905V933L1813 944M1833 933L1857 946"/>
      <g class="tlabel"><text x="1833" y="906">z</text><text x="1808" y="949">x</text><text x="1857" y="949">y</text></g>
    </svg>
    <ul class="tree">
      <li class="root"><svg class="ic"><use href="#t-part"/></svg><span>Part1</span></li>
      <li class="l1"><svg class="ic"><use href="#t-plane"/></svg><span>xy plane</span></li>
      <li class="l1"><svg class="ic"><use href="#t-plane"/></svg><span>yz plane</span></li>
      <li class="l1"><svg class="ic"><use href="#t-plane"/></svg><span>zx plane</span></li>
      <li class="l1 open"><button class="tg" aria-label="Collapse"><svg><use href="#t-minus"/></svg></button><svg class="ic"><use href="#t-geo"/></svg><span>Geometrical Set.1</span></li>
      <li class="l2"><button class="tg" aria-label="Expand"><svg><use href="#t-plus"/></svg></button><svg class="ic"><use href="#t-sk"/></svg><span>Sketch.1</span></li>
      <li class="l2"><button class="tg" aria-label="Expand"><svg><use href="#t-plus"/></svg></button><svg class="ic"><use href="#t-sk"/></svg><span>Sketch.2</span></li>
      <li class="l2"><svg class="ic"><use href="#t-plane"/></svg><span>Plane.1</span></li>
      <li class="l2"><button class="tg" aria-label="Expand"><svg><use href="#t-plus"/></svg></button><svg class="ic"><use href="#t-sk"/></svg><span>Sketch.3</span></li>
      <li class="l2"><button class="tg" aria-label="Expand"><svg><use href="#t-plus"/></svg></button><svg class="ic"><use href="#t-sk"/></svg><span>Sketch.4</span></li>
      <li class="l2"><svg class="ic"><use href="#t-comb"/></svg><span>Combine.1</span></li>
      <li class="l2"><svg class="ic"><use href="#t-comb"/></svg><span>Combine.2</span></li>
      <li class="l2"><button class="tg" aria-label="Expand"><svg><use href="#t-plus"/></svg></button><svg class="ic"><use href="#t-ext"/></svg><span>Extrude.1</span></li>
      <li class="l2"><svg class="ic"><use href="#t-fill"/></svg><span>Fill.1</span></li>
      <li class="l2"><button class="tg" aria-label="Expand"><svg><use href="#t-plus"/></svg></button><svg class="ic"><use href="#t-join"/></svg><span>Join.1</span></li>
      <li class="l2"><button class="tg" aria-label="Expand"><svg><use href="#t-plus"/></svg></button><svg class="ic"><use href="#t-sk"/></svg><span>Sketch.5</span></li>
      <li class="l2"><button class="tg" aria-label="Expand"><svg><use href="#t-plus"/></svg></button><svg class="ic"><use href="#t-ext"/></svg><span>Extrude.2</span></li>
      <li class="l2 last"><svg class="ic"><use href="#t-trim"/></svg><span>Trim.1</span></li>
      <li class="l1 open last"><button class="tg" aria-label="Collapse"><svg><use href="#t-minus"/></svg></button><svg class="ic"><use href="#t-body"/></svg><span>PartBody</span></li>
      <li class="l2 last leaf"><svg class="ic"><use href="#t-thick"/></svg><span class="current">ThickSurface.1</span></li>
    </ul>
  </section>
  <div class="side">
    <i class="grip"></i>
    <button class="b dd" aria-label="Sketcher"><svg><use href="#i-sketch"/></svg></button>
    <i class="grip"></i>
    <button class="b dd" aria-label="Select"><svg><use href="#i-arrow"/></svg></button>
    <i class="grip"></i>
    <button class="b" aria-label="Constraints Defined in Dialog Box"><svg><use href="#i-dimx"/></svg></button>
    <button class="b" aria-label="Constraint"><svg><use href="#i-dim"/></svg></button>
    <i class="grip"></i>
    <button class="b" aria-label="Point"><svg><use href="#i-pt"/></svg></button>
    <button class="b" aria-label="Line"><svg><use href="#i-ln"/></svg></button>
    <button class="b" aria-label="Plane"><svg><use href="#i-pl"/></svg></button>
    <i class="grip"></i>
    <button class="b" aria-label="Assemble"><svg><use href="#i-b1"/></svg></button>
    <i class="grip long"></i>
    <button class="b dd" aria-label="Add"><svg><use href="#i-b2"/></svg></button>
    <button class="b" aria-label="Union Trim"><svg><use href="#i-b3"/></svg></button>
    <i class="grip long"></i>
    <button class="b" aria-label="Remove Lump"><svg><use href="#i-b4"/></svg></button>
    <i class="grip"></i>
    <button class="b" aria-label="Draft Analysis"><svg><use href="#i-m1"/></svg></button>
    <button class="b" aria-label="Curvature Analysis"><svg><use href="#i-m2"/></svg></button>
    <button class="b" aria-label="Tap Analysis"><svg><use href="#i-m3"/></svg></button>
  </div>
</main>

<div class="bar bottom">
  <i class="sep first"></i>
  <button class="b" aria-label="New"><svg><use href="#i-new"/></svg></button>
  <button class="b" aria-label="Open"><svg><use href="#i-open"/></svg></button>
  <button class="b" aria-label="Save"><svg><use href="#i-save"/></svg></button>
  <button class="b" aria-label="Print"><svg><use href="#i-print"/></svg></button>
  <button class="b" aria-label="Cut"><svg><use href="#i-cut"/></svg></button>
  <button class="b" aria-label="Copy"><svg><use href="#i-copy"/></svg></button>
  <button class="b" aria-label="Paste"><svg><use href="#i-paste"/></svg></button>
  <button class="b dd" aria-label="Undo"><svg><use href="#i-undo"/></svg></button>
  <button class="b dd" aria-label="Redo"><svg><use href="#i-redo"/></svg></button>
  <button class="b" aria-label="What's This?"><svg><use href="#i-help"/></svg></button>
  <i class="sep"></i>
  <button class="b" aria-label="Formula"><svg><use href="#i-fx"/></svg></button>
  <button class="b" aria-label="Comment"><svg><use href="#i-talk"/></svg></button>
  <button class="b slim" aria-label="Link"><svg><use href="#i-link"/></svg></button>
  <button class="b dd" aria-label="Design Table"><svg><use href="#i-table"/></svg></button>
  <button class="b" aria-label="Knowledge Inspector"><svg><use href="#i-tree"/></svg></button>
  <button class="b dd" aria-label="Lock Parameter"><svg><use href="#i-lock"/></svg></button>
  <button class="b" aria-label="Equivalent Dimensions"><svg><use href="#i-eq"/></svg></button>
  <i class="sep"></i>
  <button class="b" aria-label="Fly Mode"><svg><use href="#i-fly"/></svg></button>
  <button class="b" aria-label="Fit All In"><svg><use href="#i-fit"/></svg></button>
  <button class="b" aria-label="Pan"><svg><use href="#i-pan"/></svg></button>
  <button class="b" aria-label="Rotate"><svg><use href="#i-rot"/></svg></button>
  <button class="b" aria-label="Zoom In"><svg><use href="#i-zin"/></svg></button>
  <button class="b" aria-label="Zoom Out"><svg><use href="#i-zout"/></svg></button>
  <button class="b" aria-label="Normal View"><svg><use href="#i-norm"/></svg></button>
  <button class="b" aria-describedby="tip" aria-label="Create Multi-View"><svg><use href="#i-multi"/></svg><span class="tip" id="tip" role="tooltip">Create Multi-View</span></button>
  <button class="b dd" aria-label="Isometric View"><svg><use href="#i-cube"/></svg></button>
  <button class="b dd lit" aria-label="Shading"><svg><use href="#i-shade"/></svg></button>
  <button class="b" aria-label="Hide/Show"><svg><use href="#i-hide"/></svg></button>
  <button class="b" aria-label="Swap Visible Space"><svg><use href="#i-swap"/></svg></button>
  <i class="sep"></i>
  <button class="b" aria-label="Capture"><svg><use href="#i-cam"/></svg></button>
  <i class="sep"></i>
  <button class="b" aria-label="Apply Update"><svg><use href="#i-upd"/></svg></button>
  <i class="sep"></i>
  <button class="b" aria-label="Update All"><svg><use href="#i-all"/></svg></button>
  <button class="b" aria-label="Manual Update"><svg><use href="#i-manu"/></svg></button>
  <button class="b" aria-label="Axis System"><svg><use href="#i-axis"/></svg></button>
  <button class="b num" aria-label="Mean Dimensions"><span>10,<em>1</em></span><span>10,<em>0</em></span></button>
  <button class="b dd" aria-label="Create Datum"><svg><use href="#i-body"/></svg></button>
  <button class="b" aria-label="Catalog"><svg><use href="#i-cat"/></svg></button>
  <button class="b dd" aria-label="Selection Set"><svg><use href="#i-lines"/></svg></button>
  <button class="b" aria-label="Only Current Body"><svg><use href="#i-face"/></svg></button>
  <div class="combo"><select aria-label="In Work Object"><option>PartBody</option></select></div>
  <i class="sep"></i>
  <button class="b" aria-label="Measure Between"><svg><use href="#i-meas"/></svg></button>
  <button class="b" aria-label="Measure Item"><svg><use href="#i-cal"/></svg></button>
  <button class="b" aria-label="Measure Inertia"><svg><use href="#i-wt"/></svg></button>
  <div class="logo">
    <svg viewBox="0 0 36 26"><g fill="none" stroke-width="3"><path d="M12 2c6-1 9 0 8 3-1 2-4 3-7 4 2 0 4 1 4 3" stroke="#d8343c"/><path d="M7 13c9-1 10 2 8 6-2 3-7 5-12 5l5-8" stroke="#4a44a4"/><path d="M30 12c-6-1-9 1-8 3 1 3 5 3 4 6-1 2-6 3-10 3" stroke="#f09a30"/></g></svg>
    <b>CATIA</b>
  </div>
</div>

<footer class="status">
  <p>Multi viewpoint in the current window</p>
  <input type="text" aria-label="Power input">
  <button class="sbtn" aria-label="Dialog"><svg viewBox="0 0 20 20"><path d="M4 4h8v8H4zM13 14h4v3M6 6h4" fill="none" stroke="#9a9aae" stroke-width="2"/></svg></button>
  <button class="sbtn info" aria-label="Information"><svg viewBox="0 0 20 20"><path d="M3 2h15v17H1z" fill="#9ea6ae"/><path d="M1 19h18V3" fill="none" stroke="#222" stroke-width="2"/><circle cx="10" cy="9" r="7" fill="#f4fcff" stroke="#124" stroke-width="2"/><path d="M8 15l5 4v-4z" fill="#f4fcff"/><path d="M10 4v2M8 8h2v5M8 13h5" stroke="#1a8ad8" stroke-width="2" fill="none"/></svg></button>
</footer>

<div class="taskbar">
  <button aria-label="Start menu"><svg viewBox="0 0 20 20"><path d="M0 3l8-1v8H0zM9 2l11-2v10H9zM0 11h8v8l-8-1zM9 11h11v9L9 19z" fill="#fff"/></svg></button>
  <button aria-label="Search"><svg viewBox="0 0 20 20" class="wl"><circle cx="12" cy="8" r="7"/><path d="M7 13l-7 7"/></svg></button>
  <button aria-label="Cortana"><svg viewBox="0 0 20 20" class="wl bold"><circle cx="10" cy="10" r="8"/></svg></button>
  <button aria-label="Task View"><svg viewBox="0 0 20 20" class="wl"><path d="M1 6h12v8H1zM1 0v3h12V0M1 20v-3h12v3M18 0v5M18 11v9"/><path d="M17 7h3v3h-3z" fill="#fff" stroke="none"/></svg></button>
  <button class="dim" aria-label="N"><svg viewBox="0 0 20 20"><path d="M1 1h18v18H1z" fill="#292929"/><path d="M5 15V5l9 10V5" fill="none" stroke="#8a8a8a" stroke-width="2"/></svg></button>
  <button class="run" aria-label="Microsoft Edge"><svg viewBox="0 0 20 20"><circle cx="10" cy="10" r="10" fill="url(#edge)"/><path d="M2 5c5-7 18-5 18 4 0 4-4 5-7 4 1-3-1-6-5-6-3 0-5 1-7 3z" fill="#4ccb74"/><path d="M7 10c-1 5 4 8 10 6-5 6-15 3-13-3 1-2 2-3 3-3z" fill="#1a4f9c"/><path d="M19 13c-2 2-6 2-8 0 0 2 3 4 7 3z" fill="#1e1e1e"/></svg></button>
  <button class="run on" aria-label="CATIA"><svg class="framed"><use href="#i-app"/></svg></button>
  <div class="tray">
    <svg viewBox="0 0 20 20" class="wl"><circle cx="13" cy="4" r="3"/><circle cx="6" cy="10" r="3"/><path d="M1 19c0-7 10-7 10 0M9 8c4-2 9 0 9 6"/></svg>
    <svg viewBox="0 0 20 20" class="wl"><path d="M2 14l8-8 8 8"/></svg>
    <svg viewBox="0 0 20 20" class="wl"><path d="M1 5h16v10H1zM19 8v4"/><path d="M3 7h12v6H3z" fill="#fff" stroke="none"/></svg>
    <svg viewBox="0 0 20 20" class="wl"><path d="M0 8h3l4-4v12l-4-4H0zM10 8c1 1 1 3 0 4M13 6c2 2 2 6 0 8M16 4c4 3 4 9 0 12"/></svg>
    <svg viewBox="0 0 20 20" class="wl"><circle cx="9" cy="10" r="8"/><path d="M1 10h12M2 6h14M2 14h8M9 2c-5 4-5 12 0 16M9 2c4 3 4 6 4 8"/><circle cx="15" cy="15" r="4" fill="#1e1e1e"/><path d="M13 17l4-4"/></svg>
    <span>ENG</span>
    <time>07:31 PM</time>
    <svg viewBox="0 0 20 20" class="wl note"><path d="M1 1h18v14h-6l-3 4-3-4H1z"/></svg>
  </div>
</div>
</body>
</html>
```
FILE: styles.css
```css
* { box-sizing: border-box; }

body {
  margin: 0;
  height: 100vh;
  display: flex;
  flex-direction: column;
  overflow: hidden;
  background: #cfcfe4;
  color: #1c1c2a;
  font-family: "Noto Sans", "Open Sans", sans-serif;
  font-size: 14px;
  line-height: 20px;
}

button {
  border: 0;
  padding: 0;
  background: none;
  color: inherit;
  font: inherit;
}

.defs { position: absolute; width: 0; height: 0; }

/* Title bar */
.titlebar {
  display: flex;
  align-items: center;
  height: 29px;
  padding: 0 3px 0 3px;
  background: #fff;
  color: #000;
}
.titlebar h1 {
  flex: 1;
  margin: 0 0 0 7px;
  font-size: 14px;
  font-weight: 400;
}
.appicon { width: 17px; height: 17px; }
.win { width: 58px; height: 28px; }
.win svg { width: 14px; height: 14px; display: block; margin: auto; }
.win path { fill: none; stroke: #000; }

/* Menu bar */
.menubar {
  display: flex;
  align-items: center;
  height: 24px;
}
.menubar > button { height: 24px; padding: 0 15px; }
.menubar > button.active { width: 60px; padding: 0 8px; background: #ffe2b4; text-align: left; }
.menubar > button.vpm { padding: 0 6px 0 9px; }
.menuicon { width: 24px; height: 20px; margin-right: 2px; }
.mdi { display: flex; gap: 2px; margin-left: auto; padding-bottom: 1px; }
.mdi button { width: 23px; height: 23px; background: #fbfbff; }
.mdi svg { width: 10px; height: 10px; display: block; margin: auto; }
.mdi path { fill: none; stroke: #7c8c9c; stroke-width: 2; }

/* Toolbars */
.bar {
  display: flex;
  align-items: flex-start;
  background: linear-gradient(#fff 0, #f4f4fa 3px, #cfcfe4 12px, #cfcfe4 30px, #9b9bb0 100%);
}
.top {
  height: 49px;
  justify-content: flex-end;
  padding: 6px 45px 0 0;
  border-bottom: 3px double #55555f;
}
.bottom { height: 48px; padding: 8px 7px 0 6px; border-bottom: 2px solid #74748a; }
.b {
  position: relative;
  flex: none;
  display: grid;
  place-items: center;
  width: 35px;
  height: 35px;
}
.b > svg { width: 28px; height: 28px; display: block; }
.bar .dd { margin-right: 3px; }
.dd::after {
  content: "";
  position: absolute;
  left: 28px;
  top: 30px;
  border: 5px solid transparent;
  border-top: 6px solid #000;
  border-bottom: 0;
}
.dd.lit::after { box-shadow: 0 0 0 1px #fff; background: #fff; }
.slim { width: 29px; }
.sep {
  flex: none;
  width: 3px;
  height: 20px;
  margin: -1px 7px 0 12px;
  background: #fff;
  border-right: 1px solid #9a9aae;
}
.sep.first { margin-left: 0; }
.top .sep { margin: -2px 7px 0 13px; }
.top .sep.tall { height: 42px; margin: -5px 5px 0 2px; }
.num {
  align-content: center;
  color: #111;
  font: 700 13px/14px "Liberation Sans", Arial, sans-serif;
}
.num em { color: #1430d8; font-style: normal; }

.combo {
  position: relative;
  width: 203px;
  height: 27px;
  margin: 5px 0 0 2px;
}
.combo select {
  appearance: none;
  width: 100%;
  height: 100%;
  padding: 0 4px;
  border: 2px solid #77778a;
  border-right-color: #eee;
  border-bottom-color: #eee;
  border-radius: 0;
  background: #fff;
  color: #222;
  font: inherit;
}
.combo::before {
  content: "";
  position: absolute;
  right: 3px;
  top: 3px;
  width: 18px;
  height: 21px;
  background: #dcdce8;
  border: 1px solid #77778a;
  border-left-color: #fff;
  border-top-color: #fff;
}
.combo::after {
  content: "";
  position: absolute;
  right: 7px;
  top: 12px;
  border: 5px solid transparent;
  border-top-color: #000;
  border-bottom: 0;
}

.logo {
  display: flex;
  flex-direction: column;
  align-items: center;
  width: 52px;
  margin: -6px 0 0 auto;
}
.logo svg { width: 40px; height: 28px; }
.logo b {
  color: #3c3c98;
  font: italic 700 16px/14px "Open Sans", sans-serif;
}

.tip {
  position: absolute;
  left: -45px;
  top: 39px;
  z-index: 2;
  padding: 0 2px 0 5px;
  border: 1px solid #333;
  background: #ffffe1;
  white-space: nowrap;
  color: #333;
  line-height: 20px;
}

/* Work area */
.work { flex: 1; display: flex; min-height: 0; }
.strip {
  flex: none;
  display: flex;
  flex-direction: column;
  justify-content: space-between;
  width: 25px;
  border-left: 2px solid #88889a;
  border-right: 1px solid #4c4ca0;
  background: #7c7cfa;
}
.strip button { height: 22px; border-bottom: 1px solid #2c2c80; }
.strip button:last-child { border-top: 1px solid #2c2c80; border-bottom: 0; }
.strip svg { width: 14px; height: 14px; display: block; margin: auto; }

.view {
  flex: 1;
  display: grid;
  min-width: 0;
  min-height: 0;
  background: linear-gradient(#000 0, #0d0d0d 40%, #181818 66%, #383838 77%, #606060 88%, #969696 100%);
}
.scene, .tree { grid-area: 1 / 1; min-height: 0; }
.scene { width: 100%; height: 100%; }
.part { shape-rendering: crispEdges; }
.ink { stroke: #050505; stroke-width: 2; vector-effect: non-scaling-stroke; }
.thin { vector-effect: non-scaling-stroke; }
.rimdark { fill: none; stroke: #050505; stroke-width: 14; }
.rimlight { fill: none; stroke: #969eaa; stroke-width: 4; shape-rendering: auto; }
.axes { fill: none; stroke: #fff; stroke-width: 3; }
.compass path { fill: url(#dots); stroke: #cfcff0; stroke-width: 6; }
.compass circle { fill: #d4c8f8; }
.compass rect { fill: #d80808; }
.clabel { fill: #e8e020; font-size: 14px; }
.triad { fill: none; stroke: #d8d8d8; }
.tlabel { fill: #f0f0f0; font-size: 15px; }

/* Specification tree */
.tree {
  z-index: 1;
  display: flex;
  flex-direction: column;
  justify-self: start;
  width: 300px;
  margin: 0;
  padding: 0 0 55px;
  list-style: none;
  color: #ececec;
  font-size: 20px;
  font-weight: 300;
  line-height: 30px;
}
.tree li {
  --line: linear-gradient(#fff, #fff);
  flex: 1;
  position: relative;
  display: flex;
  align-items: center;
  background-repeat: no-repeat;
}
.tree .ic { width: 34px; height: 34px; margin-bottom: 6px; }
.tree span { padding: 0 3px 0 1px; border-radius: 3px; background: #000; }
.root { padding-left: 11px; }
.root .ic { width: 32px; height: 32px; }
.root span { margin-left: 4px; }
.root { background-image: var(--line); background-size: 2px 12px; background-position: 19px 100%; }
.l1 {
  padding-left: 39px;
  background-image: var(--line), var(--line);
  background-size: 2px 100%, 16px 2px;
  background-position: 19px 0, 21px calc(50% - 2px);
}
.l1 span { margin-left: 2px; }
.l1.open {
  background-image: var(--line), var(--line), var(--line);
  background-size: 2px 100%, 16px 2px, 2px 8px;
  background-position: 19px 0, 21px calc(50% - 2px), 49px 100%;
}
.l1.open.last { background-size: 2px 50%, 16px 2px, 2px 8px; }
.l2 {
  padding-left: 67px;
  background-image: var(--line), var(--line), var(--line);
  background-size: 2px 100%, 16px 2px, 2px 100%;
  background-position: 49px 0, 50px calc(50% - 2px), 19px 0;
}
.l2.last { background-size: 2px 46%, 16px 2px, 2px 100%; }
.l2.leaf { background-size: 2px 46%, 16px 2px, 0 0; }
.l2 span { margin-left: 4px; }
.tree .current { text-decoration: underline; text-decoration-thickness: 2px; text-underline-offset: 2px; }
.tg { position: absolute; left: 41px; top: calc(50% - 12px); width: 18px; height: 18px; }
.l1 .tg { left: 12px; }
.tg svg { width: 18px; height: 18px; display: block; }

/* Right toolbar */
.side {
  flex: none;
  display: flex;
  flex-direction: column;
  width: 48px;
  padding: 11px 0 0 6px;
  background: linear-gradient(90deg, #fff 0, #f4f4fa 4px, #cfcfe4 9px, #cfcfe4 38px, #b0b0c4 100%);
}
.side .b { margin-left: 2px; }
.side .dd { margin-bottom: 3px; }
.grip {
  flex: none;
  width: 20px;
  height: 3px;
  margin: 11px 0 8px;
  background: #fff;
  border-bottom: 1px solid #9a9aae;
}
.grip.long { width: 42px; height: 2px; margin: 3px 0 5px; }

/* Status bar */
.status {
  display: flex;
  align-items: center;
  gap: 4px;
  height: 29px;
  padding: 0 2px 0 4px;
}
.status p { flex: 1; margin: 0; }
.status input {
  width: 374px;
  height: 23px;
  border: 2px solid #85859a;
  border-right-color: #f0f0f8;
  border-bottom-color: #f0f0f8;
  background: #fff;
  font: inherit;
}
.sbtn {
  width: 38px;
  height: 26px;
  border: 1px solid #8a8a9e;
  border-left-color: #fff;
  border-top-color: #fff;
}
.sbtn svg { width: 20px; height: 20px; display: block; margin: auto; }

/* Taskbar */
.taskbar {
  display: flex;
  height: 38px;
  background: #1c1c1c;
  color: #fff;
}
.taskbar button { width: 45px; height: 38px; }
.taskbar svg { width: 20px; height: 20px; display: block; margin: auto; }
.taskbar .dim { margin-left: 3px; }
.taskbar .run { border-bottom: 3px solid #6cb86c; padding-top: 3px; width: 36px; margin-left: 6px; }
.taskbar .run.on { width: 45px; margin-left: 5px; background: #474747; }
.framed { border: 2px solid #eee; }
.wl { fill: none; stroke: #fff; stroke-width: 1; }
.wl.bold { stroke-width: 3; }
.tray {
  display: flex;
  align-items: center;
  gap: 10px;
  margin-left: auto;
  padding-right: 30px;
}
.tray svg:first-child { margin-right: 9px; }
.tray time { margin: 0 16px 0 6px; }
```
